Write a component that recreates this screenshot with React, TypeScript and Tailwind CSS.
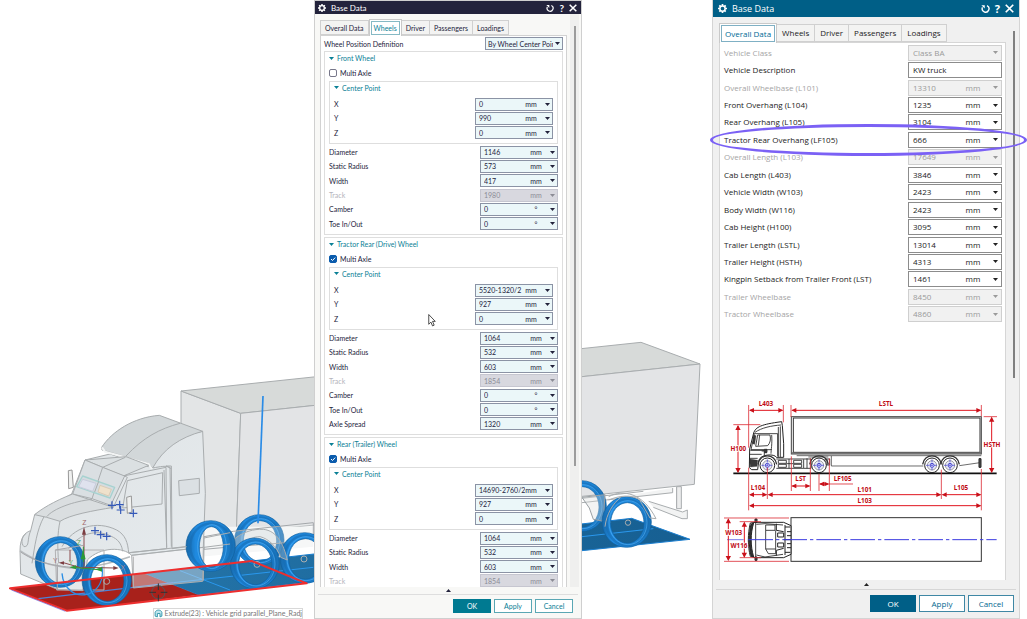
import React, { useId } from "react";

type FieldData = {
  label: string;
  value: string;
  unit?: string;
  disabled?: boolean;
  marked?: boolean;
  kind?: "text" | "select";
};

type WheelGroup = {
  title: string;
  multiAxle: boolean;
  center: FieldData[];
  fields: FieldData[];
  rowsClass: string;
};

const TABS = ["Overall Data", "Wheels", "Driver", "Passengers", "Loadings"];

const center = (x: string, y: string): FieldData[] => [
  { label: "X", value: x, unit: "mm" },
  { label: "Y", value: y, unit: "mm" },
  { label: "Z", value: "0", unit: "mm" },
];

const sizeFields = (d: string, r: string, w: string, t: string): FieldData[] => [
  { label: "Diameter", value: d, unit: "mm" },
  { label: "Static Radius", value: r, unit: "mm" },
  { label: "Width", value: w, unit: "mm" },
  { label: "Track", value: t, unit: "mm", disabled: true },
];

const ANGLES: FieldData[] = [
  { label: "Camber", value: "0", unit: "°" },
  { label: "Toe In/Out", value: "0", unit: "°" },
];

const WHEEL_GROUPS: WheelGroup[] = [
  {
    title: "Front Wheel",
    multiAxle: false,
    center: center("0", "990"),
    fields: [...sizeFields("1146", "573", "417", "1980"), ...ANGLES],
    rowsClass: "h-[86px]",
  },
  {
    title: "Tractor Rear (Drive) Wheel",
    multiAxle: true,
    center: center("5520-1320/2", "927"),
    fields: [
      ...sizeFields("1064", "532", "603", "1854"),
      ...ANGLES,
      { label: "Axle Spread", value: "1320", unit: "mm" },
    ],
    rowsClass: "h-[100px]",
  },
  {
    title: "Rear (Trailer) Wheel",
    multiAxle: true,
    center: center("14690-2760/2", "927"),
    fields: sizeFields("1064", "532", "603", "1854"),
    rowsClass: "h-[57px]",
  },
];

const OVERALL: FieldData[] = [
  { label: "Vehicle Class", value: "Class BA", disabled: true, kind: "select" },
  { label: "Vehicle Description", value: "KW truck", kind: "text" },
  { label: "Overall Wheelbase (L101)", value: "13310", unit: "mm", disabled: true },
  { label: "Front Overhang (L104)", value: "1235", unit: "mm" },
  { label: "Rear Overhang (L105)", value: "3104", unit: "mm" },
  { label: "Tractor Rear Overhang (LF105)", value: "666", unit: "mm", marked: true },
  { label: "Overall Length (L103)", value: "17649", unit: "mm", disabled: true },
  { label: "Cab Length (L403)", value: "3846", unit: "mm" },
  { label: "Vehicle Width (W103)", value: "2423", unit: "mm" },
  { label: "Body Width (W116)", value: "2423", unit: "mm" },
  { label: "Cab Height (H100)", value: "3095", unit: "mm" },
  { label: "Trailer Length (LSTL)", value: "13014", unit: "mm" },
  { label: "Trailer Height (HSTH)", value: "4313", unit: "mm" },
  { label: "Kingpin Setback from Trailer Front (LST)", value: "1461", unit: "mm" },
  { label: "Trailer Wheelbase", value: "8450", unit: "mm", disabled: true },
  { label: "Tractor Wheelbase", value: "4860", unit: "mm", disabled: true },
];

function Caret({ className = "" }: { className?: string }) {
  return (
    <svg viewBox="0 0 10 6" className={`h-[3px] w-[5px] shrink-0 ${className}`} fill="currentColor" aria-hidden="true">
      <path d="M0 0h10L5 6z" />
    </svg>
  );
}

function GearIcon({ className = "" }: { className?: string }) {
  return (
    <svg viewBox="0 0 24 24" className={className} fill="none" stroke="currentColor" aria-hidden="true">
      <circle cx="12" cy="12" r="7" strokeWidth="4" />
      <path
        d="M12 0v5M12 19v5M0 12h5M19 12h5M3.500 3.500l3.500 3.500M17 17l3.500 3.500M3.500 20.500l3.500-3.500M17 7l3.500-3.500"
        strokeWidth="4.500"
      />
    </svg>
  );
}

function TitleBar({ large = false }: { large?: boolean }) {
  const icon = large ? "size-[9px]" : "size-2";
  return (
    <header
      className={
        large
          ? "flex h-[17px] shrink-0 items-center bg-[#005f87] pl-[5px] pr-[5px] text-[9px] text-white"
          : "flex h-[13px] shrink-0 items-center bg-[#23233c] pl-[3px] pr-[4px] text-[8px] text-white"
      }
    >
      <GearIcon className={icon} />
      <h2 className="ml-[5px]">Base Data</h2>
      <div className="ml-auto flex items-center gap-[5px]">
        <button type="button" aria-label="Reset">
          <svg viewBox="0 0 24 24" className={icon} fill="none" stroke="currentColor" strokeWidth="3.600">
            <path d="M16 4.500A9 9 0 1 1 4 9" />
            <path d="M1 3h9v9z" fill="currentColor" stroke="none" />
          </svg>
        </button>
        <button type="button" aria-label="Help" className={large ? "text-[11px] leading-none font-bold" : "text-[10px] leading-none font-bold"}>
          ?
        </button>
        <button type="button" aria-label="Close">
          <svg viewBox="0 0 24 24" className={icon} stroke="currentColor" strokeWidth="4.500">
            <path d="M2 2l20 20M22 2L2 22" />
          </svg>
        </button>
      </div>
    </header>
  );
}

function Tabs({ active, large = false }: { active: string; large?: boolean }) {
  return (
    <div role="tablist" className={large ? "relative flex h-[19px] items-end" : "relative flex h-[16px] items-end"}>
      {TABS.map((tab) => {
        const on = tab === active;
        return (
          <button
            key={tab}
            type="button"
            role="tab"
            aria-selected={on}
            className={
              on
                ? `-mb-px flex self-stretch border border-b-0 border-[#c9c9c9] bg-white p-px ${large ? "text-[#006a96]" : "text-[#0a8096]"}`
                : `border border-l-0 border-[#d0d0d0] bg-[#f3f3f2] first:border-l ${large ? "h-[18px] px-[5px]" : "h-[15px] px-[4px]"}`
            }
          >
            {on ? (
              <span
                className={
                  large
                    ? "flex items-center border border-[#7fb0c4] px-[3px]"
                    : "flex items-center border border-[#86b9c4] px-[2px]"
                }
              >
                {tab}
              </span>
            ) : (
              tab
            )}
          </button>
        );
      })}
    </div>
  );
}

function Field({ field, large = false, inner = false }: { field: FieldData; large?: boolean; inner?: boolean }) {
  const id = useId();
  const { label, value, unit, disabled, marked, kind } = field;

  const tone = large
    ? disabled
      ? "border-[#cfcfcf] bg-[#f1f1f1] text-[#9a9a9a]"
      : "border-[#8c8c8c] bg-white text-[#222]"
    : disabled
      ? "border-[#c6c6d0] bg-[#d8d8df] text-[#8c8c96]"
      : "border-[#8b93a5] bg-[#ebf7f9] text-[#23233c]";
  const labelTone = disabled ? (large ? "text-[#a5a5a5]" : "text-[#b4b4bc]") : "";

  return (
    <div className="relative flex items-center justify-between">
      <label htmlFor={id} className={`whitespace-nowrap ${labelTone}`}>
        {label}
      </label>
      <div
        className={`relative flex items-center border ${tone} ${
          large ? "h-[16px] w-[94px] pl-[4px]" : inner ? "h-[13px] w-[78px] pl-[3px]" : "h-[13px] w-[78px] pl-[3px]"
        }`}
      >
        {kind === "select" ? (
          <select id={id} disabled={disabled} className="w-full appearance-none opacity-100 outline-none">
            <option>{value}</option>
          </select>
        ) : (
          <input id={id} defaultValue={value} disabled={disabled} className="w-full min-w-0 outline-none" />
        )}
        {unit && (
          <select
            aria-label={`${label} unit`}
            disabled={disabled}
            className={`shrink-0 appearance-none text-center opacity-100 outline-none ${large ? "mr-[20px] w-[16px]" : "mr-[15px] w-[12px]"}`}
          >
            <option>{unit}</option>
          </select>
        )}
        {kind !== "text" && (
          <Caret className={`pointer-events-none absolute ${large ? "right-[3px]" : "right-[2px]"}`} />
        )}
      </div>
      {marked && (
        <span className="pointer-events-none absolute -inset-y-[7px] -right-[25px] -left-[14px] z-10 rounded-[50%] border-3 border-[#7b61f5]" />
      )}
    </div>
  );
}

function GroupTitle({ inner = false, children }: { inner?: boolean; children: React.ReactNode }) {
  return (
    <h3 className={`flex items-center gap-[3px] pl-[4px] text-[#0a8096] ${inner ? "h-[11px]" : "h-[12px]"}`}>
      <Caret />
      {children}
    </h3>
  );
}

function WheelPanel({ group }: { group: WheelGroup }) {
  return (
    <section className="border border-[#dedede] pr-[4px] pb-[3px]">
      <GroupTitle>{group.title}</GroupTitle>
      <label className="flex h-[17px] items-center gap-[3px] pl-[4px]">
        <input
          type="checkbox"
          defaultChecked={group.multiAxle}
          className="peer size-[8px] appearance-none rounded-[2px] border border-[#77778a] bg-white checked:border-[#0b5cad] checked:bg-[#0b5cad]"
        />
        <svg viewBox="0 0 8 8" className="pointer-events-none absolute hidden size-[8px] peer-checked:block" fill="none" stroke="#fff">
          <path d="M2 4l1.500 1.500L6.200 2.600" />
        </svg>
        Multi Axle
      </label>
      <div className="ml-[4px] border border-[#dedede] pb-[3px]">
        <GroupTitle inner>Center Point</GroupTitle>
        <div className="mt-[4px] grid h-[43px] auto-rows-fr pr-[4px] pl-[4px]">
          {group.center.map((f) => (
            <Field key={f.label} field={f} inner />
          ))}
        </div>
      </div>
      <div className={`mt-px grid auto-rows-fr pl-[4px] ${group.rowsClass}`}>
        {group.fields.map((f) => (
          <Field key={f.label} field={f} />
        ))}
      </div>
    </section>
  );
}

function Footer({ large = false }: { large?: boolean }) {
  const size = large ? "h-[17px] w-[46px]" : "h-[14px] w-[38px]";
  const line = large ? "border-[#3f87a4] text-[#00678f]" : "border-[#5aa7b4] text-[#0a8096]";
  return (
    <footer className="shrink-0 px-[3px]">
      <div className={large ? "flex h-[9px] items-center justify-center" : "flex h-[7px] items-center justify-center"}>
        <Caret className="rotate-180" />
      </div>
      <div
        className={
          large
            ? "flex h-[29px] items-start justify-end gap-[3px] border-t border-[#d6d6d6] pt-[5px] pr-[2px]"
            : "flex h-[24px] items-start justify-end gap-[3px] border-t border-[#dedede] pt-[4px] pr-[5px]"
        }
      >
        <button type="button" className={`${size} text-white ${large ? "bg-[#005f87]" : "bg-[#007a91]"}`}>
          OK
        </button>
        <button type="button" className={`${size} border bg-white ${line}`}>
          Apply
        </button>
        <button type="button" className={`${size} border bg-white ${line}`}>
          Cancel
        </button>
      </div>
    </footer>
  );
}

function WheelsDialog() {
  return (
    <section className="z-10 flex h-screen min-w-0 flex-col border border-[#cfcfcf] bg-[#f8f8f6] font-['Lato','Open_Sans',sans-serif] text-[7px] leading-[10px] text-[#23233c]">
      <TitleBar />
      <div className="flex min-h-0 flex-1 overflow-hidden pr-[2px] pl-[5px]">
        <div className="min-w-0 flex-1 pt-[5px]">
          <Tabs active="Wheels" />
          <div className="border border-[#d2d2d2] bg-white px-[3px]">
            <div className="flex h-[15px] items-center justify-between">
              <label htmlFor="position">Wheel Position Definition</label>
              <div className="relative flex h-[13px] w-[78px] items-center border border-[#8b93a5] bg-[#ebf7f9]">
                <select id="position" className="w-[67px] appearance-none overflow-hidden pl-[2px] whitespace-nowrap outline-none">
                  <option>By Wheel Center Point</option>
                </select>
                <Caret className="pointer-events-none absolute right-[2px]" />
              </div>
            </div>
            <div className="flex flex-col gap-[2px]">
              {WHEEL_GROUPS.map((g) => (
                <WheelPanel key={g.title} group={g} />
              ))}
            </div>
          </div>
        </div>
        <div className="ml-[3px] flex w-[9px] justify-center bg-[#efefee] pt-[12px]">
          <div className="h-[440px] w-[2px] bg-[#9c9c9c]" />
        </div>
      </div>
      <Footer />
    </section>
  );
}

const Arrow = ({ d, ends }: { d: string; ends: string }) => (
  <>
    <path d={d} stroke="#e0141e" strokeWidth="3" />
    <path d={ends} fill="#c8101a" stroke="none" />
  </>
);

// horizontal and vertical dimension lines with solid heads
function HDim({ x1, x2, y }: { x1: number; x2: number; y: number }) {
  return (
    <Arrow
      d={`M${x1 + 3} ${y}H${x2 - 3}`}
      ends={`M${x1} ${y}l15-7v14zM${x2} ${y}l-15-7v14z`}
    />
  );
}

function VDim({ x, y1, y2 }: { x: number; y1: number; y2: number }) {
  return (
    <Arrow
      d={`M${x} ${y1 + 3}V${y2 - 3}`}
      ends={`M${x} ${y1}l-8 15h16zM${x} ${y2}l-8-15h16z`}
    />
  );
}

const DIM_LABELS: [string, number, number][] = [
  ["L403", 153, 47],
  ["LSTL", 513, 47],
  ["H100", 70, 181],
  ["HSTH", 831, 169],
  ["LST", 257, 273],
  ["LF105", 383, 273],
  ["L104", 129, 300],
  ["L101", 449, 304],
  ["L105", 738, 300],
  ["L103", 449, 337],
  ["W103", 56, 434],
  ["W116", 72, 473],
];

function TruckDiagram() {
  return (
    <svg viewBox="15 20 855 550" className="mt-auto w-full" fill="none" stroke="#222" strokeWidth="3" role="img" aria-label="Truck dimensions">
      {/* ground */}
      <path d="M55 249H845" stroke="#111" strokeWidth="5" />

      {/* trailer, side */}
      <rect x="229" y="79" width="570" height="112" stroke="#444" />
      <rect x="235" y="83" width="560" height="103" stroke="#333" />
      <path d="M229 188H799" stroke="#666" strokeWidth="5" />
      <path d="M245 196H799M349 197V227H625M733 226L795 217M280 200H340" strokeWidth="2" />
      <path d="M792 205h6v26h-6z" fill="#555" />

      {/* chassis */}
      <path d="M184 206H288V234H184M190 210h24v9h-24zM190 222h24v9h-24zM236 210h24v9h-24zM236 222h24v9h-24zM214 220H236M276 204v30M330 206h14v18h-14zM222 206v28M266 207v26M336 208v16" strokeWidth="2.500" />

      {/* cab, side */}
      <path
        d="M103 232L104 176L116 128C122 110 138 102 200 94L202 106L206 160V201H184C180 190 135 190 131 212L128 238H110z"
        fill="#fff"
      />
      <path d="M120 126C140 112 170 106 198 104M116 130H188V198M190 110V200M196 108V200M118 132L108 178H170" strokeWidth="2.500" />
      <path d="M128 134H165C168 146 166 158 158 166L122 168zM134 134L130 166M170 134C172 160 168 180 168 190M140 182h18M106 180H148V196M104 192H140M104 204H128M104 216H126" strokeWidth="2.500" />
      <path d="M116 134l7 2-4 26-6-2zM104 206l24 4-2 18-20 2zM148 176h8v12h-8z" fill="#3a3a3a" strokeWidth="1" />

      {/* wheels */}
      {[157, 312, 651, 705].map((x) => (
        <g key={x}>
          <path d={`M${x - 28} 222C${x - 24} 188 ${x + 24} 188 ${x + 28} 222`} strokeWidth="4" stroke="#333" />
          <circle cx={x} cy="225" r="22" fill="#fff" stroke="#222" strokeWidth="3" />
          <circle cx={x} cy="225" r="14" fill="#e6e8f6" stroke="#777" strokeWidth="2" />
          <circle cx={x} cy="225" r="6" fill="#fff" stroke="#4a4ac8" />
          <path d={`M${x - 18} 225h36M${x} 207v36`} stroke="#3a3ad8" strokeWidth="2" strokeDasharray="9 3" />
        </g>
      ))}

      {/* top view */}
      <rect x="228" y="382" width="571" height="131" stroke="#333" />
      <path d="M106 398C98 430 98 468 106 498L122 502H206L228 492V406L206 396H122z" fill="#fff" />
      <path d="M108 402L116 398C106 430 106 466 116 500L108 496C101 466 101 430 108 402z" fill="#333" />
      <path d="M122 386V510" strokeWidth="3" stroke="#444" />
      <path d="M120 386h6v10h-6zM120 500h6v10h-6z" fill="#555" />
      <path d="M152 404H180V420H152zM152 420V476H182V420M152 476L160 490H182V476M124 402L150 400L204 404M124 494L150 500L204 492" strokeWidth="2.500" />
      <path d="M188 428h18v12h-18zM188 458h18v12h-18zM210 404V494M184 400V420L206 424M184 496V480L206 474M216 424h12M216 436h12M216 460h12M216 472h12M206 448h22M210 410h16M210 486h16" strokeWidth="3" />
      <path d="M100 448H845" stroke="#3a3ae0" strokeWidth="3" strokeDasharray="74 9 10 9" />
      <path d="M36 448H86" stroke="#3a3ae0" strokeWidth="2" />

      {/* extension lines */}
      <path
        d="M101 44V172M101 232V360M205 44V96M228 44V80M799 44V78M55 103H136M806 79H846M229 198V302M286 204V302M312 250V302M343 204V302M157 232V326M679 238V326M799 236V360M27 383H222M27 513H222M74 394H138M74 502H138M342 281H414"
        stroke="#dc3038"
        strokeWidth="2.500"
      />
      <HDim x1={102} x2={205} y={60} />
      <HDim x1={229} x2={799} y={60} />
      <HDim x1={229} x2={286} y={287} />
      <HDim x1={312} x2={343} y={281} />
      <HDim x1={102} x2={157} y={313} />
      <HDim x1={158} x2={679} y={313} />
      <HDim x1={680} x2={799} y={313} />
      <HDim x1={102} x2={799} y={346} />
      <VDim x={69} y1={104} y2={248} />
      <VDim x={830} y1={79} y2={248} />
      <VDim x={40} y1={384} y2={512} />
      <VDim x={88} y1={394} y2={502} />

      {DIM_LABELS.map(([text, x, y]) => (
        <text
          key={text}
          x={x}
          y={y}
          textAnchor="middle"
          className="font-bold"
          fontSize="19"
          fill="#c00a14"
          stroke="#fff"
          strokeWidth="5"
          paintOrder="stroke"
        >
          {text}
        </text>
      ))}
    </svg>
  );
}

function OverallDialog() {
  return (
    <section className="z-10 flex h-screen min-w-0 flex-col border-x border-b border-[#d4d4d4] bg-[#f0f0f0] text-[8px] leading-[12px] text-[#222]">
      <TitleBar large />
      <div className="flex min-h-0 flex-1 pr-px pl-[6px]">
        <div className="flex min-w-0 flex-1 flex-col pt-[6px]">
          <Tabs active="Overall Data" large />
          <div className="flex flex-1 flex-col border border-b-0 border-[#d6d6d6] bg-white">
            <div className="grid h-[280px] auto-rows-fr pt-px pr-[3px] pl-[4px]">
              {OVERALL.map((f) => (
                <Field key={f.label} field={f} large />
              ))}
            </div>
            <TruckDiagram />
          </div>
        </div>
        <div className="ml-[4px] flex w-[8px] justify-center pt-[14px]">
          <div className="h-[347px] w-[2px] bg-[#808080]" />
        </div>
      </div>
      <Footer large />
    </section>
  );
}

// open cylinder seen at an angle; hole is the half width of the opening
function Tyre({ x, y, hole = 50, shift = 2 }: { x: number; y: number; hole?: number; shift?: number }) {
  return (
    <g>
      <path
        d={`M${x - 74} ${y}a74 76 0 1 1 148 0a74 76 0 1 1 -148 0zM${x + shift - hole} ${y + 3}a${hole} 61 0 1 0 ${hole * 2} 0a${hole} 61 0 1 0 -${hole * 2} 0z`}
        fill="url(#tyre)"
        fillRule="evenodd"
        stroke="#0f5f9f"
        strokeWidth="2"
      />
      <ellipse cx={x + 1} cy={y + 1} rx="62" ry="69" stroke="#1568ab" strokeWidth="7" opacity=".5" />
      <ellipse cx={x + shift + 2} cy={y + 2} rx={hole + 7} ry="66" stroke="#4eaef5" strokeWidth="2" />
    </g>
  );
}

function Scene() {
  return (
    <svg
      viewBox="0 -1080 3081 1857"
      className="absolute inset-0 h-full w-full"
      fill="none"
      stroke="#a9adaf"
      strokeWidth="3"
      strokeLinejoin="round"
      role="img"
      aria-label="3D view of the vehicle"
    >
      <defs>
        <linearGradient id="tyre">
          <stop offset="0" stopColor="#1768a8" />
          <stop offset=".2" stopColor="#1f8ae0" />
          <stop offset=".7" stopColor="#1f86d8" />
          <stop offset="1" stopColor="#176fb4" />
        </linearGradient>
        <linearGradient id="body" x1="0" y1="0" x2="1" y2="1">
          <stop offset="0" stopColor="#dfe3e5" />
          <stop offset="1" stopColor="#e6ebee" />
        </linearGradient>
        <linearGradient id="blueFloor">
          <stop offset="0" stopColor="#2474a8" />
          <stop offset="1" stopColor="#165f92" />
        </linearGradient>
      </defs>

      {/* floor */}
      <path d="M430 640L755 603L1895 475L2070 538L1746 572L595 705z" fill="url(#blueFloor)" stroke="#1c7fd0" />
      <path d="M30 685L430 640L595 705L200 752z" fill="#a8211b" stroke="none" />
      <path d="M115 716L520 668" stroke="#4d83d8" strokeWidth="4" />
      <path d="M520 668L940 622M1746 530L1960 506M540 632L690 690" stroke="#2a98ee" strokeWidth="3" />

      {/* trailer */}
      <path d="M543 93L722 160L709 520L620 500L543 480z" fill="#e3e5e6" />
      <path d="M543 93L1923 -53L2100 12L722 160z" fill="#d7dad9" />
      <path d="M722 160L2100 12L2083 373L709 520z" fill="#e3e4e6" />
      <path d="M1746 428L2018 398V384M1746 415L1930 394M2030 380V445M2042 378V446M1946 424L2048 456L2062 450V476L2046 476L1960 442" fill="#f2f3f3" />
      <path d="M2030 380h14v66h-14z" fill="#eceded" />

      {/* rear tyres of the trailer */}
      <Tyre x={1745} y={438} />
      <path d="M1746 412L1815 404L1812 448L1832 488L1780 478L1768 444z" fill="#d9dcde" fillOpacity=".35" stroke="#9aa0a4" />
      <Tyre x={1880} y={486} />
      <path d="M1826 410C1870 386 1930 400 1968 476L1950 474L1918 418C1890 404 1860 406 1826 420M1815 500C1820 460 1838 432 1862 412" />
      <circle cx="1884" cy="488" r="8" />

      {/* drive axles */}
      <path d="M600 500L940 500V560L600 590z" fill="#f6f7f7" stroke="none" />
      <Tyre x={778} y={540} />
      <path d="M612 530L700 514L780 505L940 488V530L860 548L700 560L612 568z" fill="#f1f2f3" fillOpacity=".25" stroke="#a4a8ab" />
      <Tyre x={914} y={594} />
      <path d="M668 590C680 545 730 505 790 508C830 512 850 550 862 600L842 592C830 560 806 536 780 530C742 530 712 560 704 606z" fill="#c9cfd3" fillOpacity=".3" />
      <Tyre x={764} y={610} />
      <circle cx="771" cy="613" r="9" />
      <circle cx="912" cy="597" r="9" />

      {/* cab body */}
      <path
        d="M255 300L330 282L445 320L480 240L608 214L616 400L610 562L395 586C370 560 300 560 262 600L248 692L172 688L62 642L60 572C60 530 78 516 92 512L104 464L215 402z"
        fill="url(#body)"
      />
      <path d="M395 586L610 562L608 664L400 684z" fill="#dfe3e6" fillOpacity=".45" />
      <path d="M612 562L610 662" />
      <Tyre x={632} y={558} hole={36} />
      <path d="M612 534L690 518M612 562L690 552" />
      {/* roof fairing */}
      <path d="M305 262C335 215 400 172 478 166L608 214C540 232 490 266 458 324L444 310L376 290L306 270z" fill="#d2d7d9" />
      <path d="M378 288C430 232 480 206 540 190M458 324C480 320 500 316 510 322L514 560" />
      <path d="M306 262L315 275L376 292L446 312L456 328" stroke="#f2f4f4" strokeWidth="6" />
      <path d="M255 300L378 290L446 316L370 348L308 322z" fill="#dbe0e2" />
      <path d="M308 322L376 292M370 348L498 322L500 566L388 578" />
      {/* windshield */}
      <path d="M255 300L308 322L374 348L332 436L276 416L218 402z" fill="#dadfe2" />
      <path d="M308 322L276 416M374 348L382 352L340 442" />
      <path d="M248 348L344 382L330 414L230 380z" fill="#d5dce0" stroke="#a6d2d0" strokeWidth="4" />
      <path d="M248 358L288 370L278 394L236 380z" fill="#dfe2ee" stroke="#c8ccdc" />
      <path d="M300 376L334 388L326 408L294 396z" fill="#efe1cb" stroke="#d8cbb5" />
      <path d="M296 364L284 396" />
      {/* hood */}
      <path d="M104 464C120 450 160 424 218 402L340 442C280 452 210 464 180 484L140 472z" fill="#dadee0" />
      <path d="M140 470C160 446 220 424 276 418M180 484C172 520 172 560 176 610M132 470C110 510 104 560 96 610M92 512C80 540 90 560 72 560C62 550 64 530 78 520" />
      <path d="M60 572C100 600 150 618 210 624C260 626 330 610 390 590" stroke="#b6bbbe" strokeWidth="5" />
      <path d="M186 560C220 500 290 480 350 510C376 524 384 548 386 580M206 566C240 520 290 504 340 532C360 542 366 560 368 574" />
      <path d="M166 570H312V690H170zM400 590V684M172 610V688" stroke="#b2b2b4" />
      {/* doors, side window, mirrors */}
      <path d="M382 362L488 338L486 432L368 444zM492 330L500 562M514 326L498 318L514 318L516 566L560 560M388 578L556 560" />
      <path d="M536 362L598 355V400L538 407z" fill="#dbe0e3" />
      <path d="M205 332L216 330L220 382L206 386zM380 412L394 408L396 456L382 460z" fill="#eff0ef" stroke="#999" />

      {/* front tyres */}
      <Tyre x={180} y={606} />
      <path d="M62 576C100 602 150 620 250 624M166 570L250 556M172 620V688" stroke="#a8a8ac" />
      <Tyre x={320} y={660} />
      <path d="M186 640C190 690 230 712 262 702M306 620C312 660 296 690 262 704" stroke="#2a8ee4" strokeWidth="4" />
      <circle cx="320" cy="664" r="9" />

      {/* floor outline */}
      <path d="M30 685L755 603L920 670L200 752z" stroke="#ee2e2e" strokeWidth="6" />
      <path d="M34 690L196 754" stroke="#6b6be0" strokeWidth="2" />

      {/* vertical datum and marks */}
      <path d="M789 108L774 490" stroke="#2a8be6" strokeWidth="5" />
      <path
        d="M324 436h24M336 424v24M347 434h24M359 422v24M350 450h24M362 438v24M388 460h24M400 448v24M273 512h24M285 500v24M290 524h24M302 512v24M308 529h24M320 517v24"
        stroke="#3358b8"
        strokeWidth="3.500"
      />

      {/* axis triad */}
      <path d="M252 620V520M246 622L345 624M252 626L190 608M210 604V570" stroke="#8a4a4c" strokeWidth="3" />
      <path d="M252 500l-6 24h12zM356 624l-16-6v12zM176 608l16-4v10z" fill="#7c3e42" stroke="none" />
      <path d="M250 606V560M220 622L305 630" stroke="#2c9a36" strokeWidth="3" />
      <path d="M249 570l-7 28h15zM286 628l20-7v14zM208 622l20-6v12z" fill="#2c9a36" stroke="none" />
      <g stroke="none" fontSize="22">
        <text x="247" y="494" fill="#a06668">Z</text>
        <text x="362" y="630" fill="#b08082">X</text>
        <text x="160" y="610" fill="#a06668">Y</text>
        <text x="230" y="555" fill="#55a860">Z</text>
        <text x="206" y="616" fill="#55a860">Y</text>
      </g>

      {/* pick cursor */}
      <circle cx="475" cy="697" r="20" stroke="#55555c" />
      <path d="M475 670V690M475 704V724M448 697H468M482 697H502" stroke="#333" strokeWidth="3" />
    </svg>
  );
}

export default function App() {
  return (
    <main className="relative grid min-h-screen grid-cols-[314fr_268fr_130fr_308fr_7fr] overflow-hidden bg-white font-['Open_Sans','Noto_Sans',sans-serif]">
      <Scene />
      <div className="relative">
        <div className="absolute right-[11px] bottom-0 flex h-[11px] items-center gap-[2px] border border-[#d8d8d8] bg-white font-['Lato','Open_Sans',sans-serif] text-[7px] leading-none whitespace-nowrap text-[#777]">
          <svg viewBox="0 0 24 24" className="size-[9px]" fill="#bfe6ee" stroke="#3298ac" strokeWidth="2.500">
            <path d="M3 9c2-8 16-8 18 0v10l-5 2V12H9v9l-6-2z" />
          </svg>
          Extrude(23) : Vehicle grid parallel_Plane_Radj
        </div>
      </div>
      <WheelsDialog />
      <div />
      <OverallDialog />
      <svg viewBox="0 0 14 24" className="absolute top-[314px] left-[428px] z-20 h-[13px] w-[8px]" fill="#fff" stroke="#333" strokeWidth="1.600" aria-hidden="true">
        <path d="M1 1v18l4-4 3 7 3-1.400-3-7h5z" />
      </svg>
    </main>
  );
}
